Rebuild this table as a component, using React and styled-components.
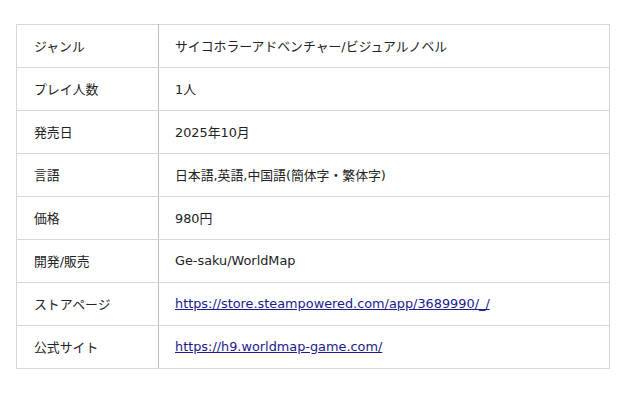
import React from 'react';
import styled, {createGlobalStyle} from 'styled-components'

const GlobalStyle = createGlobalStyle`
    body {
        margin: 0;
        background: #ffffff;
        font-family: "DejaVu Sans", "Noto Sans CJK JP", sans-serif;
    }
`;

const Page = styled.div`
    padding: 24px 16px;
`;

const InfoTable = styled.table`
    width: 594px;
    border-collapse: collapse;
    font-size: 12.85px;
    color: #222222;
`;

const Row = styled.tr`
    height: 43px;
`;

const Cell = styled.td`
    border: 1px solid #d6d6d6;
    padding: 0 16px 2px;
    vertical-align: middle;
    ${props => props.head && `
        width: 108px;
        padding-left: 17px;
        border-right-color: #bdbdbd;
    `}
`;

const Link = styled.a`
    color: #1a1a8c;
    text-decoration: underline;
`;

const rows = [
    ['ジャンル', 'サイコホラーアドベンチャー/ビジュアルノベル'],
    ['プレイ人数', '1人'],
    ['発売日', '2025年10月'],
    ['言語', '日本語,英語,中国語(簡体字・繁体字)'],
    ['価格', '980円'],
    ['開発/販売', 'Ge-saku/WorldMap'],
    ['ストアページ', 'https://store.steampowered.com/app/3689990/_/', true],
    ['公式サイト', 'https://h9.worldmap-game.com/', true],
];

export default function App() {
    return (
        <Page>
            <GlobalStyle/>
            <InfoTable>
                <tbody>
                {rows.map(([label, value, isLink]) => (
                    <Row key={label}>
                        <Cell head>{label}</Cell>
                        <Cell>
                            {isLink ? <Link href={value}>{value}</Link> : value}
                        </Cell>
                    </Row>
                ))}
                </tbody>
            </InfoTable>
        </Page>
    )
}
